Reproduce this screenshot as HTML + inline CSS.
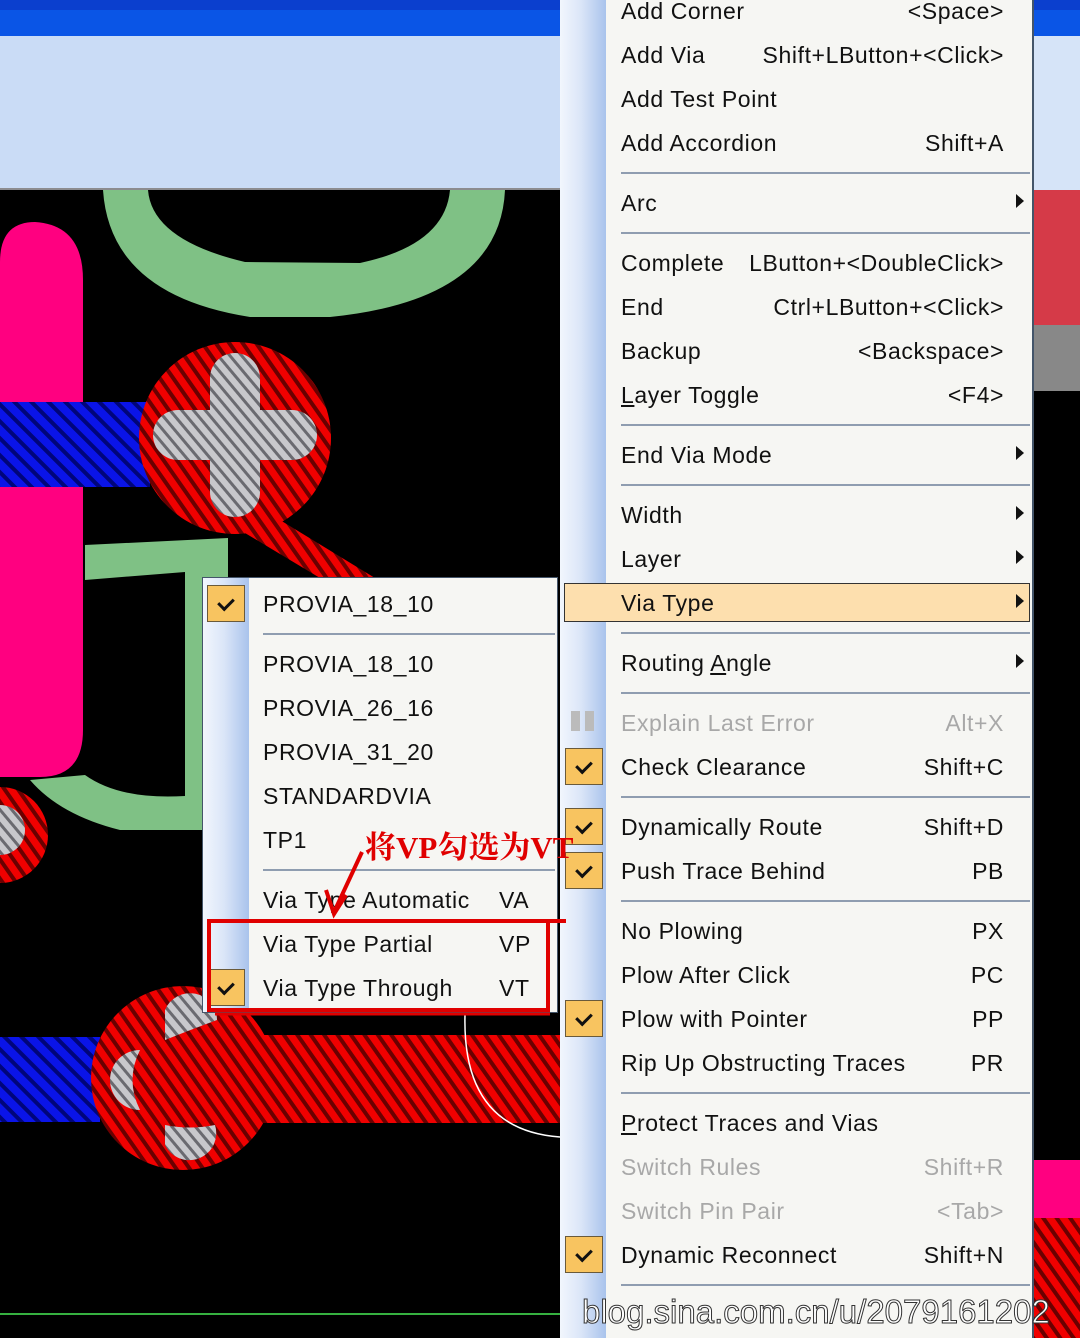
<!DOCTYPE html>
<html><head><meta charset="utf-8">
<style>
*{margin:0;padding:0;box-sizing:border-box}
body{width:1080px;height:1338px;overflow:hidden;position:relative;background:#000;font-family:"Liberation Sans","DejaVu Sans",sans-serif}
.a{position:absolute}
.menu{position:absolute;left:560px;top:0;width:474px;height:1338px;background:#f6f6f3;border-right:2px solid #44556a}
.strip{position:absolute;left:0;top:0;width:46px;height:100%;background:linear-gradient(90deg,#f2f6fd 0%,#dbe6f8 45%,#a9c3ec 100%)}
.r{position:absolute;height:30px;line-height:30px;font-size:23px;color:#111;white-space:nowrap;letter-spacing:0.6px}
.l{left:61px}
.s{right:28px;text-align:right}
.g{color:#a8a8a8}
.sep{position:absolute;left:61px;right:2px;height:2px;background:#8f9db0}
.arr{position:absolute;right:8px;width:0;height:0;border-top:7px solid transparent;border-bottom:7px solid transparent;border-left:8px solid #111}
.ck{position:absolute;width:38px;height:37px;background:#f8c460;border:1px solid #6a5a3a}
.ck::after{content:"";position:absolute;left:13px;top:9px;width:7px;height:12px;border-right:3px solid #111;border-bottom:3px solid #111;transform:rotate(45deg)}
.sub{position:absolute;left:202px;top:577px;width:356px;height:436px;background:#f6f6f3;border:1px solid #44556a}
</style></head><body>
<svg class="a" style="left:0;top:0" width="1080" height="1338">
<defs>
<pattern id="rh" width="11" height="11" patternUnits="userSpaceOnUse" patternTransform="rotate(-35)"><rect width="11" height="11" fill="#f00000"/><rect width="4" height="11" fill="#6a0000"/></pattern>
<pattern id="bh" width="12" height="12" patternUnits="userSpaceOnUse" patternTransform="rotate(-45)"><rect width="12" height="12" fill="#0a14e8"/><rect width="4" height="12" fill="#00057a"/></pattern>
<pattern id="gh" width="9" height="9" patternUnits="userSpaceOnUse" patternTransform="rotate(-40)"><rect width="9" height="9" fill="#c8c8cc"/><rect width="3" height="9" fill="#6a6a70"/></pattern>
</defs>
<rect x="0" y="0" width="1080" height="36" fill="#0a55e6"/>
<rect x="0" y="0" width="1080" height="10" fill="#0b3fce"/>
<rect x="0" y="36" width="560" height="153" fill="#cadcf6"/>
<rect x="0" y="188" width="560" height="2" fill="#8c8c90"/>
<rect x="1034" y="36" width="46" height="154" fill="#d6e4f8"/>
<rect x="1034" y="190" width="46" height="135" fill="#d53a48"/>
<rect x="1034" y="325" width="46" height="66" fill="#888"/>
<rect x="1034" y="1160" width="46" height="58" fill="#ff0080"/>
<rect x="1034" y="1218" width="46" height="120" fill="url(#rh)"/>
<!-- green arc top -->
<path d="M103 190 L148 190 Q152 240 245 262 L360 263 Q445 245 450 190 L505 190 Q500 300 330 317 L250 317 Q110 295 103 190Z" fill="#7fc185"/>
<!-- pink bar -->
<path d="M0 262 Q0 222 35 222 Q83 225 83 280 V730 Q83 777 40 777 H0Z" fill="#ff0080"/>
<!-- green lower -->
<path d="M85 545 L228 538 L228 830 L120 830 Q60 815 30 780 L85 775 Q120 800 185 796 L185 572 L85 580Z" fill="#7fc185"/>
<!-- blue bars -->
<rect x="0" y="402" width="150" height="85" fill="url(#bh)"/>
<rect x="0" y="1037" width="100" height="85" fill="url(#bh)"/>
<!-- top red pad -->
<path d="M280 520 L375 578 L320 578 L240 530Z" fill="url(#rh)"/>
<circle cx="235" cy="438" r="96" fill="url(#rh)"/>
<path d="M210 378 a25 25 0 0 1 50 0 v32 h32 a25 25 0 0 1 0 50 h-32 v32 a25 25 0 0 1 -50 0 v-32 h-32 a25 25 0 0 1 0 -50 h32z" fill="url(#gh)"/>
<!-- left red circle -->
<circle cx="0" cy="835" r="48" fill="url(#rh)"/>
<circle cx="0" cy="830" r="25" fill="url(#gh)"/>
<!-- bottom red -->
<rect x="180" y="1035" width="380" height="88" fill="url(#rh)"/>
<circle cx="183" cy="1078" r="92" fill="url(#rh)"/>
<path d="M165 1010 a27 27 0 0 1 52 10 Q190 1030 165 1040Z" fill="url(#gh)"/>
<path d="M140 1050 a30 30 0 0 0 0 60 Q125 1080 140 1050Z" fill="url(#gh)"/>
<path d="M165 1125 Q190 1130 215 1125 a27 27 0 0 1 -50 20Z" fill="url(#gh)"/>
<path d="M465 1015 Q462 1130 560 1137" stroke="#fff" fill="none" stroke-width="1.5"/>
<rect x="0" y="1313" width="560" height="2" fill="#36b040"/>
</svg>

<div class="menu">
<div class="strip"></div>
<div class="r l" style="top:-4px">Add Corner</div><div class="r s" style="top:-4px">&lt;Space&gt;</div>
<div class="r l" style="top:40px">Add Via</div><div class="r s" style="top:40px">Shift+LButton+&lt;Click&gt;</div>
<div class="r l" style="top:84px">Add Test Point</div>
<div class="r l" style="top:128px">Add Accordion</div><div class="r s" style="top:128px">Shift+A</div>
<div class="sep" style="top:172px"></div>
<div class="r l" style="top:188px">Arc</div><div class="arr" style="top:194px"></div>
<div class="sep" style="top:232px"></div>
<div class="r l" style="top:248px">Complete</div><div class="r s" style="top:248px">LButton+&lt;DoubleClick&gt;</div>
<div class="r l" style="top:292px">End</div><div class="r s" style="top:292px">Ctrl+LButton+&lt;Click&gt;</div>
<div class="r l" style="top:336px">Backup</div><div class="r s" style="top:336px">&lt;Backspace&gt;</div>
<div class="r l" style="top:380px"><u>L</u>ayer Toggle</div><div class="r s" style="top:380px">&lt;F4&gt;</div>
<div class="sep" style="top:424px"></div>
<div class="r l" style="top:440px">End Via Mode</div><div class="arr" style="top:446px"></div>
<div class="sep" style="top:484px"></div>
<div class="r l" style="top:500px">Width</div><div class="arr" style="top:506px"></div>
<div class="r l" style="top:544px">Layer</div><div class="arr" style="top:550px"></div>
<div class="a" style="left:4px;top:583px;width:466px;height:39px;background:#fddfae;border:1px solid #333"></div>
<div class="r l" style="top:588px">Via Type</div><div class="arr" style="top:594px"></div>
<div class="sep" style="top:632px"></div>
<div class="r l" style="top:648px">Routing <u>A</u>ngle</div><div class="arr" style="top:654px"></div>
<div class="sep" style="top:692px"></div>
<div class="a" style="left:11px;top:711px;width:9px;height:20px;background:#bbb"></div><div class="a" style="left:25px;top:711px;width:9px;height:20px;background:#bbb"></div>
<div class="r l g" style="top:708px">Explain Last Error</div><div class="r s g" style="top:708px">Alt+X</div>
<div class="ck" style="left:5px;top:748px"></div>
<div class="r l" style="top:752px">Check Clearance</div><div class="r s" style="top:752px">Shift+C</div>
<div class="sep" style="top:796px"></div>
<div class="ck" style="left:5px;top:808px"></div>
<div class="r l" style="top:812px">Dynamically Route</div><div class="r s" style="top:812px">Shift+D</div>
<div class="ck" style="left:5px;top:852px"></div>
<div class="r l" style="top:856px">Push Trace Behind</div><div class="r s" style="top:856px">PB</div>
<div class="sep" style="top:900px"></div>
<div class="r l" style="top:916px">No Plowing</div><div class="r s" style="top:916px">PX</div>
<div class="r l" style="top:960px">Plow After Click</div><div class="r s" style="top:960px">PC</div>
<div class="ck" style="left:5px;top:1000px"></div>
<div class="r l" style="top:1004px">Plow with Pointer</div><div class="r s" style="top:1004px">PP</div>
<div class="r l" style="top:1048px">Rip Up Obstructing Traces</div><div class="r s" style="top:1048px">PR</div>
<div class="sep" style="top:1092px"></div>
<div class="r l" style="top:1108px"><u>P</u>rotect Traces and Vias</div>
<div class="r l g" style="top:1152px">Switch Rules</div><div class="r s g" style="top:1152px">Shift+R</div>
<div class="r l g" style="top:1196px">Switch Pin Pair</div><div class="r s g" style="top:1196px">&lt;Tab&gt;</div>
<div class="ck" style="left:5px;top:1236px"></div>
<div class="r l" style="top:1240px">Dynamic Reconnect</div><div class="r s" style="top:1240px">Shift+N</div>
<div class="sep" style="top:1284px"></div>
</div>

<div class="sub">
<div class="strip"></div>
<div class="ck" style="left:4px;top:7px"></div>
<div class="r" style="left:60px;top:11px">PROVIA_18_10</div>
<div class="sep" style="left:60px;top:55px"></div>
<div class="r" style="left:60px;top:71px">PROVIA_18_10</div>
<div class="r" style="left:60px;top:115px">PROVIA_26_16</div>
<div class="r" style="left:60px;top:159px">PROVIA_31_20</div>
<div class="r" style="left:60px;top:203px">STANDARDVIA</div>
<div class="r" style="left:60px;top:247px">TP1</div>
<div class="sep" style="left:60px;top:291px"></div>
<div class="r" style="left:60px;top:307px">Via Type Automatic</div><div class="r" style="left:296px;top:307px">VA</div>
<div class="r" style="left:60px;top:351px">Via Type Partial</div><div class="r" style="left:296px;top:351px">VP</div>
<div class="ck" style="left:4px;top:391px"></div>
<div class="r" style="left:60px;top:395px">Via Type Through</div><div class="r" style="left:296px;top:395px">VT</div>
</div>

<svg class="a" style="left:0;top:0" width="1080" height="1338">
<path d="M207 921 L566 921" stroke="#e00000" stroke-width="4"/>
<path d="M209 921 L209 1010 L548 1010 L548 921" stroke="#e00000" stroke-width="4" fill="none"/>
<path d="M215 1014 L550 1014" stroke="#e00000" stroke-width="3"/>
<path d="M362 852 L335 910" stroke="#e00000" stroke-width="4"/>
<path d="M326 890 L334 914 L346 895" stroke="#e00000" stroke-width="4" fill="none"/>
</svg>
<div class="a" style="left:365px;top:828px;font-family:'Liberation Serif','Noto Serif CJK SC',serif;font-weight:bold;font-size:31px;color:#e00000;line-height:40px;white-space:nowrap">将VP勾选为VT</div>
<div class="a" style="left:582px;top:1290px;font-size:33px;color:#fff;line-height:44px;white-space:nowrap;-webkit-text-stroke:1px #333">blog.sina.com.cn/u/2079161202</div>
</body></html>
